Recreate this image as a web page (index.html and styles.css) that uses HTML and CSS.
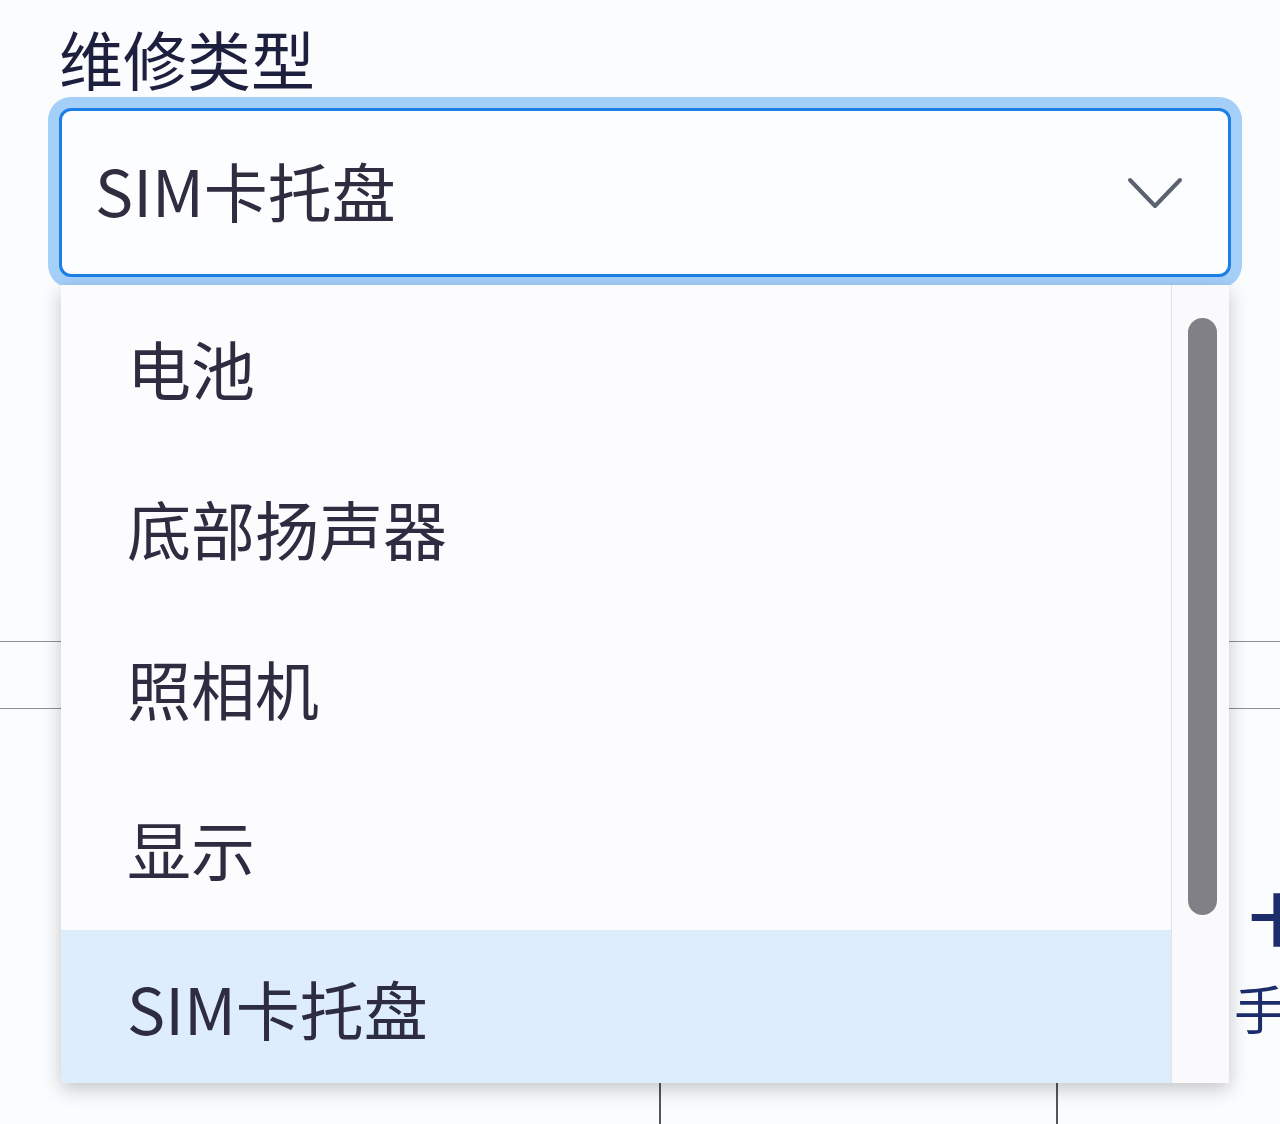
FILE: index.html
```html
<!DOCTYPE html>
<html lang="zh-CN">
<head>
    <meta charset="UTF-8">
    <meta name="viewport" content="width=device-width, initial-scale=1.0">
    <title>维修类型</title>
    <link rel="stylesheet" href="styles.css">
</head>
<body>
    <div class="page">
        <div class="field">
            <label class="field-label">维修类型</label>
            <div class="select">
                <span class="select-value">SIM卡托盘</span>
                <svg class="chevron" width="58" height="34" viewBox="0 0 58 34">
                    <polyline points="4,4 29,30 54,4" />
                </svg>
            </div>

            <!-- open dropdown menu -->
            <div class="menu">
                <ul class="menu-list">
                    <li class="menu-item">电池</li>
                    <li class="menu-item">底部扬声器</li>
                    <li class="menu-item">照相机</li>
                    <li class="menu-item">显示</li>
                    <li class="menu-item selected">SIM卡托盘</li>
                </ul>
                <div class="scrollbar">
                    <div class="scroll-thumb"></div>
                </div>
            </div>
        </div>

        <!-- table behind the menu -->
        <div class="sheet">
            <div class="sheet-row"></div>
            <div class="sheet-body">
                <div class="note-title">十</div>
                <div class="note-text">手机</div>
            </div>
            <div class="sheet-cells">
                <div class="cell"></div>
                <div class="cell"></div>
                <div class="cell"></div>
            </div>
        </div>
    </div>
</body>
</html>
```

FILE: styles.css
```css
html, body {
    margin: 0;
    height: 100%;
}
body {
    background-color: #fbfcfe;
    font-family: "Noto Sans CJK SC", "Noto Sans", sans-serif;
    overflow: hidden;
}
.page {
    width: 1280px;
    height: 1124px;
    padding-top: 22px;
    box-sizing: border-box;
    overflow: hidden;
}
.field {
    position: relative;
    width: 1172px;
    margin-left: 59px;
    z-index: 2;
}
.field-label {
    display: block;
    height: 74px;
    line-height: 70px;
    font-size: 64px;
    color: #1c1f3d;
}
.select {
    display: flex;
    align-items: center;
    justify-content: space-between;
    height: 169px;
    margin-top: 12px;
    padding: 0 44px 6px 33px;
    box-sizing: border-box;
    background-color: #fcfdff;
    border: 3px solid #1b7fe6;
    border-radius: 12px;
    box-shadow: 0 0 0 11px #a3cff9;
}
.select-value {
    font-size: 64px;
    line-height: 1.2;
    color: #2f2d3f;
}
.chevron {
    margin-top: 6px;
}
.chevron polyline {
    fill: none;
    stroke: #5a616f;
    stroke-width: 4;
    stroke-linecap: round;
    stroke-linejoin: round;
}
.menu {
    position: absolute;
    top: 263px;
    left: 2px;
    width: 1168px;
    height: 798px;
    display: flex;
    background-color: #fcfcfe;
    box-shadow: 0 6px 18px rgba(0, 0, 0, 0.22);
    overflow: hidden;
}
.menu-list {
    flex: 1;
    list-style: none;
    margin: 0;
    padding: 5px 0 0 0;
}
.menu-item {
    display: flex;
    align-items: center;
    height: 160px;
    padding: 0 0 6px 66px;
    box-sizing: border-box;
    font-size: 64px;
    color: #2e2c40;
}
.menu-item.selected {
    background-color: #deedfc;
}
.scrollbar {
    width: 58px;
    padding: 33px 12px 0 16px;
    box-sizing: border-box;
    background-color: #fafafc;
    border-left: 1px solid #e2e3e7;
}
.scroll-thumb {
    height: 597px;
    background-color: #808086;
    border-radius: 15px;
}
.sheet {
    margin-top: 364px;
    position: relative;
    z-index: 1;
}
.sheet-row {
    height: 66px;
    border-top: 1.5px solid #8c8f99;
    border-bottom: 1.5px solid #8c8f99;
}
.sheet-body {
    padding-top: 173px;
    white-space: nowrap;
    color: #1d2c6b;
}
.note-title {
    height: 70px;
    line-height: 70px;
    padding-left: 1249px;
    font-size: 56px;
    font-weight: bold;
}
.note-text {
    height: 70px;
    line-height: 70px;
    margin-top: 21px;
    padding-left: 1234px;
    font-size: 52px;
}
.sheet-cells {
    display: grid;
    grid-template-columns: 659px 397px 1fr;
    height: 90px;
    margin-top: 8px;
}
.cell + .cell {
    border-left: 2px solid #55555f;
}
```
